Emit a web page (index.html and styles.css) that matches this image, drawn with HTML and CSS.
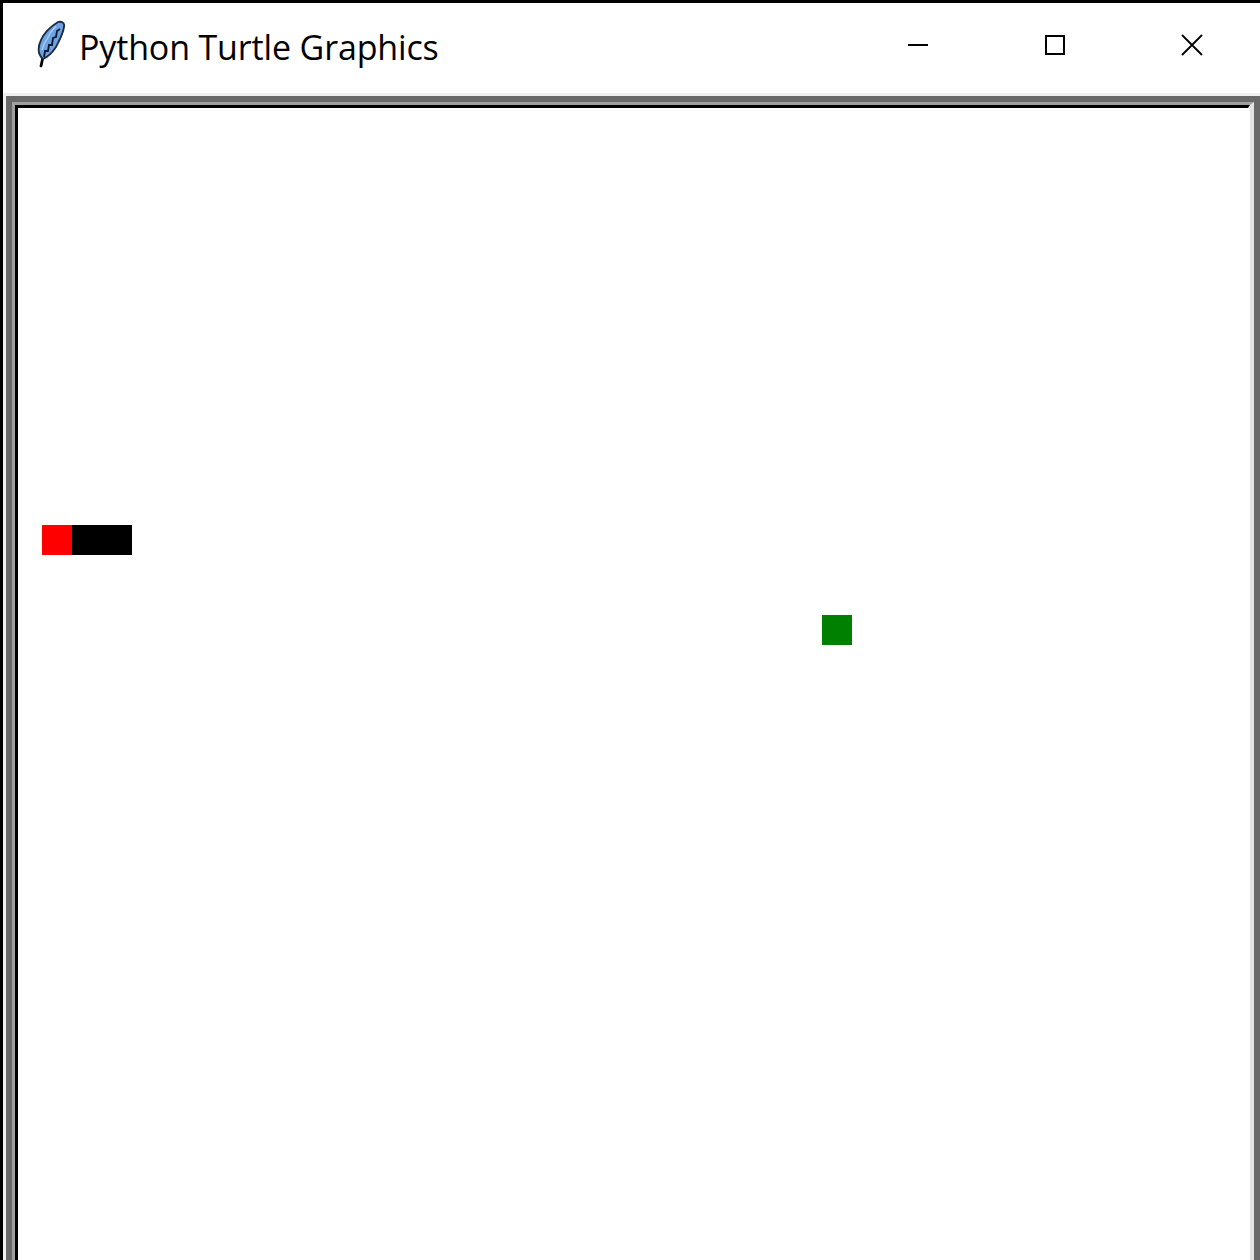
FILE: index.html
```html
<!DOCTYPE html>
<html>
<head>
<meta charset="utf-8">
<title>Python Turtle Graphics</title>
<link rel="stylesheet" href="styles.css">
</head>
<body>
<div class="window">
  <div class="titlebar">
    <div class="title-left">
      <svg class="feather" width="32" height="50" viewBox="0 0 32 50">
        <path d="M7 46 L9 37" stroke="#000" stroke-width="2.8" fill="none" stroke-linecap="round"/>
        <path d="M9 39 C3 34 4 26 7 20 C10 13 16 7 24 2 C28 1 31 3 30 7 C29 14 25 21 22 27 C18 33 14 37 9 39 Z" fill="#6ea2e0" stroke="#1a2a40" stroke-width="1.8"/>
        <path d="M10 37 L11 31 L14 31 L15 25 L18 25 L19 18 L22 17 L23 11 L26 9" stroke="#0c1a2e" stroke-width="1.8" fill="none"/>
        <path d="M8 30 L10 24 L13 19 L17 12 L22 6" stroke="#a8ccf4" stroke-width="1.4" fill="none"/>
      </svg>
      <span class="title-text">Python Turtle Graphics</span>
    </div>
    <div class="controls">
      <div class="ctrl">
        <svg width="22" height="22" viewBox="0 0 22 22"><path d="M1 11 H21" stroke="#000" stroke-width="2"/></svg>
      </div>
      <div class="ctrl">
        <svg width="22" height="22" viewBox="0 0 22 22"><rect x="2" y="2" width="18" height="18" stroke="#000" stroke-width="2" fill="none"/></svg>
      </div>
      <div class="ctrl">
        <svg width="22" height="22" viewBox="0 0 22 22"><path d="M1 1 L21 21 M21 1 L1 21" stroke="#000" stroke-width="1.8"/></svg>
      </div>
    </div>
  </div>
  <div class="client">
    <div class="frame">
      <div class="sunken-outer">
        <div class="canvas">
          <div class="seg head"></div>
          <div class="seg body b1"></div>
          <div class="seg body b2"></div>
          <div class="seg food"></div>
        </div>
      </div>
    </div>
  </div>
</div>
</body>
</html>
```
FILE: styles.css
```css
html, body {
  margin: 0;
  padding: 0;
  background: #ffffff;
  overflow: hidden;
}
.window {
  width: 1260px;
  height: 1260px;
  box-sizing: border-box;
  border-left: 3px solid #000;
  border-top: 3px solid #000;
  display: flex;
  flex-direction: column;
  overflow: hidden;
}
.titlebar {
  height: 90px;
  flex: none;
  background: #fff;
  display: flex;
  align-items: center;
  justify-content: space-between;
}
.title-left {
  display: flex;
  align-items: center;
  margin-top: -3px;
}
.feather {
  margin-left: 31px;
  margin-top: -3px;
  display: block;
}
.title-text {
  margin-left: 13px;
  font-family: "Open Sans", "Noto Sans", sans-serif;
  font-size: 34px;
  letter-spacing: -0.15px;
  color: #000;
  margin-top: 1px;
}
.controls {
  display: flex;
  align-items: center;
  margin-right: 57px;
  margin-top: -7px;
}
.ctrl {
  width: 22px;
  height: 22px;
  margin-left: 115px;
}
.ctrl svg { display: block; }
.client {
  flex: 1;
  background: #f0f0f0;
  padding: 3px 0 0 3px;
  display: flex;
}
.frame {
  flex: 1;
  border-top: 6px solid #696969;
  border-left: 6px solid #696969;
  border-right: 6px solid #696969;
  display: flex;
}
.sunken-outer {
  flex: 1;
  border-top: 3px solid #a0a0a0;
  border-left: 3px solid #a0a0a0;
  border-right: 4px solid #e3e3e3;
  display: flex;
}
.canvas {
  flex: 1;
  position: relative;
  background: #fff;
  border-top: 3px solid #000;
  border-left: 3px solid #000;
  border-right: 2px solid #fff;
}
.seg {
  position: absolute;
  width: 30px;
  height: 30px;
}
.head { left: 24px; top: 417px; background: #ff0000; }
.body { background: #000; }
.b1 { left: 54px; top: 417px; }
.b2 { left: 84px; top: 417px; }
.food { left: 804px; top: 507px; background: #008000; }
```
